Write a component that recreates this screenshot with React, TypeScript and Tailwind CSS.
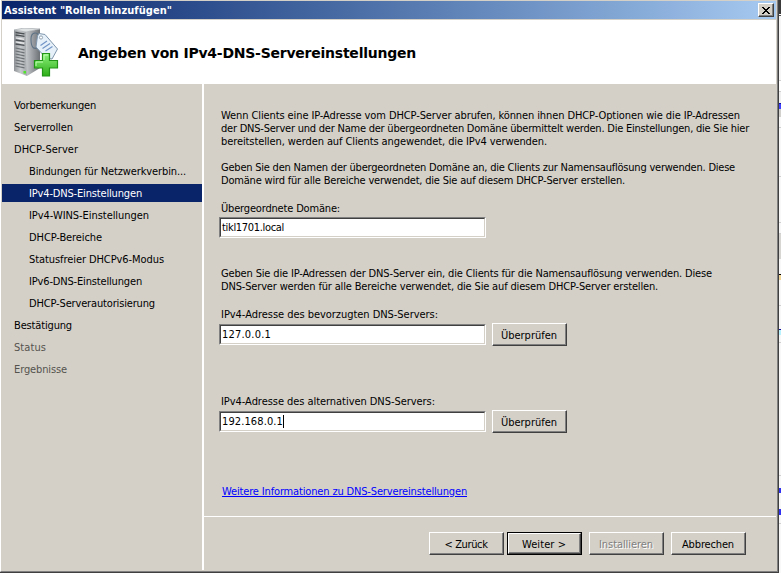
import { useLayoutEffect, useRef, useState } from "react";

const face = "font-['DejaVu_Sans_Condensed','DejaVu_Sans',sans-serif] font-stretch-condensed";

/* One line of text, tracked so that it fills the given width. */
function Line({ text, width, className = "" }: { text: string; width: number; className?: string }) {
  const ref = useRef<HTMLSpanElement>(null);
  const [tracking, setTracking] = useState(0);
  useLayoutEffect(() => {
    if (!ref.current) return;
    const natural = ref.current.getBoundingClientRect().width - tracking * text.length;
    setTracking((width - natural) / text.length);
  }, [text, width]);
  return (
    <span ref={ref} className={`inline-block whitespace-pre ${className}`} style={{ letterSpacing: tracking }}>
      {text}
    </span>
  );
}

type Step = { text: string; width: number; sub?: boolean; active?: boolean; off?: boolean };

const steps: Step[] = [
  { text: "Vorbemerkungen", width: 82 },
  { text: "Serverrollen", width: 59 },
  { text: "DHCP-Server", width: 64 },
  { text: "Bindungen für Netzwerkverbin...", width: 157, sub: true },
  { text: "IPv4-DNS-Einstellungen", width: 113, sub: true, active: true },
  { text: "IPv4-WINS-Einstellungen", width: 120, sub: true },
  { text: "DHCP-Bereiche", width: 73, sub: true },
  { text: "Statusfreier DHCPv6-Modus", width: 135, sub: true },
  { text: "IPv6-DNS-Einstellungen", width: 113, sub: true },
  { text: "DHCP-Serverautorisierung", width: 126, sub: true },
  { text: "Bestätigung", width: 58 },
  { text: "Status", width: 32, off: true },
  { text: "Ergebnisse", width: 53, off: true },
];

function Field({ text, width, caret }: { text: string; width: number; caret?: boolean }) {
  return (
    <div className="h-[21px] w-[267px] border border-t-[#808080] border-l-[#808080] border-r-white border-b-white">
      <div className="flex h-full items-center border border-t-[#404040] border-l-[#404040] border-r-[#d4d0c8] border-b-[#d4d0c8] bg-white pl-px">
        <Line text={text} width={width} />
        {caret && <span className="h-[13px] w-px bg-black" />}
      </div>
    </div>
  );
}

function Button({ text, width, primary, off }: { text: string; width: number; primary?: boolean; off?: boolean }) {
  return (
    <button className={`block h-[23px] w-[75px] shrink-0 bg-[#d4d0c8] ${primary ? "border border-black" : ""}`}>
      <span className="flex h-full w-full border border-t-white border-l-white border-r-[#404040] border-b-[#404040]">
        <span className="flex h-full w-full items-center justify-center border-r border-b border-[#808080] pt-0.5">
          <Line text={text} width={width} className={off ? "text-[#808080] [text-shadow:1px_1px_0_#fff]" : ""} />
        </span>
      </span>
    </button>
  );
}

function ServerIcon() {
  return (
    <svg width="48" height="50" viewBox="0 0 48 50" className="block">
      <defs>
        <linearGradient id="side" x1="0" x2="1">
          <stop offset="0" stopColor="#c5c8cb" />
          <stop offset="1" stopColor="#6c7176" />
        </linearGradient>
        <linearGradient id="front" x1="0" x2="1">
          <stop offset="0" stopColor="#8e9296" />
          <stop offset=".5" stopColor="#c6c9cb" />
          <stop offset="1" stopColor="#a4a8ab" />
        </linearGradient>
        <linearGradient id="plus" x1="0" y1="0" x2="0" y2="1">
          <stop offset="0" stopColor="#8af07a" />
          <stop offset="1" stopColor="#2eae18" />
        </linearGradient>
      </defs>
      <path d="M12 4 L26 1 V40 L13 48Z" fill="url(#side)" />
      <path d="M0 2 L12 4 L13 48 L0 43Z" fill="url(#front)" />
      <path d="M0 2 L10 0 L26 1 L12 4Z" fill="#dfe2e3" stroke="#9aa0a4" strokeWidth=".6" />
      <path d="M1.500 4.500l9 1.400M1.500 7l9 1.400M1.500 12l9 1.400M1.500 16l9 1.400" stroke="#4b5054" strokeWidth="1.400" />
      <path d="M1.500 20l9 1.800M1.500 23l9 1.800M1.500 26l9 1.800M1.500 29l9 1.800M1.500 32l9 1.800M1.500 35l9 1.800M1.500 38l9 1.800" stroke="#6c7175" strokeWidth="1.200" />
      <path d="M2 10l8 1.300M2 14l8 1.300" stroke="#f0f1f2" strokeWidth="1" />
      <rect x="9.500" y="43" width="2.500" height="2.500" fill="#50e52c" />
      <path d="M26 9C23 3 17 4 17 11C17 18 19 23 25 19" fill="none" stroke="#5f7385" strokeWidth="1.100" />
      <path d="M23.500 8 L25 5.500 L31 6.500 L43.500 21 L38 31 L32 30 L22 19Z" fill="#e6f0f9" stroke="#7f96ac" strokeWidth="1" />
      <circle cx="27" cy="9.500" r="1.600" fill="#fff" stroke="#7c8f9f" strokeWidth=".8" />
      <path d="M26.500 17.500l6.500-4.500M28.500 20.500l7.500-5M31.500 23l7-4.500" stroke="#7295c6" strokeWidth="1.200" />
      <path d="M28.500 25.500h7v7h8v7.500h-8v8h-7v-8h-8v-7.500h8z" fill="url(#plus)" stroke="#229516" strokeWidth="1.200" />
      <path d="M30 32v-5h4M22 38v-4h7" fill="none" stroke="#c2ffb5" strokeWidth="1" />
    </svg>
  );
}

/* Sliver of the window behind the dialog: runs of height and colour. */
const sliver: [number, string][] = [
  [14, "#3a3a3a"], [1, "#ffffff"], [1, "#555555"], [64, "#f6f6f6"], [1, "#cfcfcf"], [10, "#ffffff"],
  [1, "#cfcfcf"], [11, "#f0f0f0"], [1, "#1010a0"], [5, "#4040ff"], [8, "#d2d0cc"], [10, "#f8f8f8"],
  [1, "#cfcfcf"], [48, "#f8f8f8"], [1, "#cfcfcf"], [45, "#f8f8f8"], [1, "#cfcfcf"], [10, "#f8f8f8"],
  [1, "#cfcfcf"], [25, "#d8d6d2"], [15, "#f8f8f8"], [1, "#000000"], [5, "#f2d79a"], [25, "#f8f8f8"],
  [1, "#cfcfcf"], [23, "#f8f8f8"], [1, "#1010a0"], [5, "#b8f2ff"], [7, "#f8f8f8"], [1, "#cfcfcf"],
  [132, "#f8f8f8"], [1, "#cfcfcf"], [12, "#f8f8f8"], [5, "#3030f0"], [16, "#f8f8f8"], [6, "#3030f0"],
  [8, "#f8f8f8"], [1, "#cfcfcf"], [49, "#f8f8f8"],
];

export default function App() {
  return (
    <div className={`flex h-[573px] w-[781px] overflow-hidden bg-[#f4f4f4] text-[11px] leading-[13px] text-black ${face}`}>
      <div className="h-[573px] w-[779px] shrink-0 border-r border-b border-[#404040] bg-[#d4d0c8]">
        <div className="flex h-[572px] flex-col border-r border-b border-l border-r-[#808080] border-b-[#808080] border-l-white pt-px">
          <header className="mx-px flex h-[18px] shrink-0 items-center justify-between bg-linear-to-r from-[#0a246a] to-[#a6caf0] pr-0.5 pl-0.5">
            <Line text={'Assistent "Rollen hinzufügen"'} width={168} className="font-bold text-white" />
            <button className="flex h-[14px] w-4 items-center justify-center border border-t-white border-l-white border-r-[#404040] border-b-[#404040] bg-[#d4d0c8] shadow-[inset_-1px_-1px_0_#808080]">
              <svg width="8" height="7" viewBox="0 0 8 7" shapeRendering="crispEdges">
                <path d="M0 0h2v1h1v1h2v-1h1v-1h2v1h-1v1h-1v1h-1v1h1v1h1v1h1v1h-2v-1h-1v-1h-2v1h-1v1h-2v-1h1v-1h1v-1h1v-1h-1v-1h-1v-1h-1z" fill="#000" />
              </svg>
            </button>
          </header>
          <div className="mx-px mt-px flex h-16 shrink-0 bg-white pt-2 pl-3">
            <ServerIcon />
            <h1 className="pt-[15px] pl-4 font-['DejaVu_Sans',sans-serif] text-[14px] leading-[20px] font-bold font-stretch-normal">
              <Line text="Angeben von IPv4-DNS-Servereinstellungen" width={338} />
            </h1>
          </div>
          <div className="mx-px flex min-h-0 flex-1">
            <nav className="w-[200px] shrink-0 pt-2.5">
              {steps.map((s) => (
                <div key={s.text} className="flex h-[22px] items-center">
                  <div
                    className={`flex h-[18px] w-full items-center ${s.sub ? "pl-[27px]" : "pl-3"} ${s.active ? "bg-[#0a246a] text-white" : ""} ${s.off ? "text-[#55534e]" : ""}`}
                  >
                    <Line text={s.text} width={s.width} />
                  </div>
                </div>
              ))}
            </nav>
            <div className="mb-px w-0.5 shrink-0 bg-white" />
            <main className="flex min-w-0 flex-1 flex-col">
              <section className="flex h-[432px] shrink-0 flex-col items-start pt-[25px] pl-[15px]">
                <div className="flex flex-col items-start pl-[2px]">
                  <Line text="Wenn Clients eine IP-Adresse vom DHCP-Server abrufen, können ihnen DHCP-Optionen wie die IP-Adressen" width={519} />
                  <Line text="der DNS-Server und der Name der übergeordneten Domäne übermittelt werden. Die Einstellungen, die Sie hier" width={528} />
                  <Line text="bereitstellen, werden auf Clients angewendet, die IPv4 verwenden." width={326} />
                  <Line className="mt-[13px]" text="Geben Sie den Namen der übergeordneten Domäne an, die Clients zur Namensauflösung verwenden. Diese" width={514} />
                  <Line text="Domäne wird für alle Bereiche verwendet, die Sie auf diesem DHCP-Server erstellen." width={404} />
                  <Line className="mt-[15px]" text="Übergeordnete Domäne:" width={119} />
                </div>
                <div className="mt-[2px]">
                  <Field text="tikl1701.local" width={62} />
                </div>
                <div className="mt-[29px] flex flex-col items-start pl-[2px]">
                  <Line text="Geben Sie die IP-Adressen der DNS-Server ein, die Clients für die Namensauflösung verwenden. Diese" width={491} />
                  <Line text="DNS-Server werden für alle Bereiche verwendet, die Sie auf diesem DHCP-Server erstellen." width={437} />
                  <Line className="mt-[15px]" text="IPv4-Adresse des bevorzugten DNS-Servers:" width={217} />
                </div>
                <div className="mt-[2px] flex items-start gap-[6px]">
                  <div className="pt-px">
                    <Field text="127.0.0.1" width={49} />
                  </div>
                  <Button text="Überprüfen" width={56} />
                </div>
                <Line className="mt-[49px] ml-[2px]" text="IPv4-Adresse des alternativen DNS-Servers:" width={214} />
                <div className="mt-[2px] flex items-start gap-[6px]">
                  <div className="pt-px">
                    <Field text="192.168.0.1" width={61} caret />
                  </div>
                  <Button text="Überprüfen" width={56} />
                </div>
                <a className="mt-[52px] ml-[3px] text-[#0000ff]">
                  <Line text="Weitere Informationen zu DNS-Servereinstellungen" width={245} className="underline" />
                </a>
              </section>
              <footer className="flex border-t border-white pt-[15px] pl-[225px]">
                <Button text="< Zurück" width={43} />
                <div className="w-[3px]" />
                <Button text="Weiter >" width={44} primary />
                <div className="w-[7px]" />
                <Button text="Installieren" width={54} off />
                <div className="w-[7px]" />
                <Button text="Abbrechen" width={52} />
              </footer>
            </main>
          </div>
        </div>
      </div>
      <div className="flex w-0.5 flex-col">
        {sliver.map(([height, color], i) => (
          <div key={i} className="shrink-0" style={{ height, backgroundColor: color }} />
        ))}
      </div>
    </div>
  );
}
